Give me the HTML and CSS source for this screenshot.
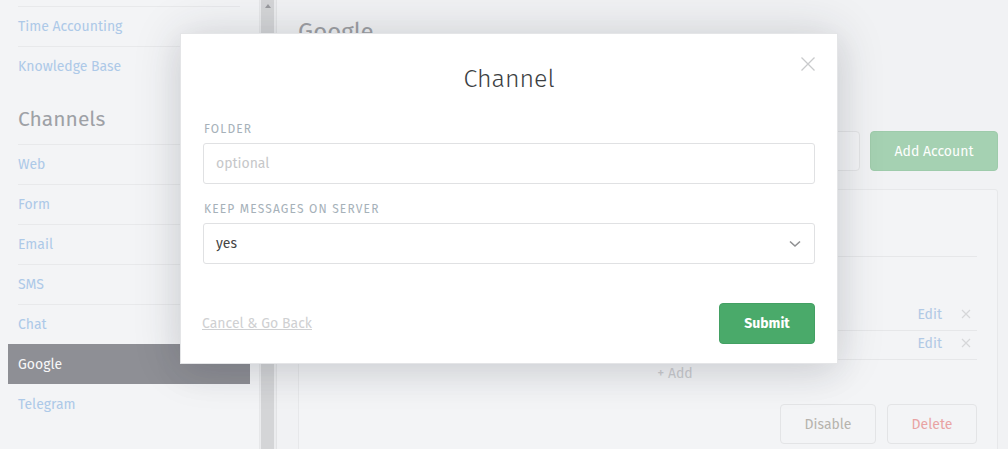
FILE: index.html
```html
<!DOCTYPE html>
<html lang="en">
<head>
<meta charset="utf-8">
<title>Channel</title>
<link rel="stylesheet" href="styles.css">
</head>
<body>
<div class="app">
  <aside class="sidebar">
    <ul class="nav">
      <li class="nav-item">Time Accounting</li>
      <li class="nav-item">Knowledge Base</li>
    </ul>
    <h2 class="nav-heading">Channels</h2>
    <ul class="nav">
      <li class="nav-item">Web</li>
      <li class="nav-item">Form</li>
      <li class="nav-item">Email</li>
      <li class="nav-item">SMS</li>
      <li class="nav-item">Chat</li>
      <li class="nav-item active">Google</li>
      <li class="nav-item">Telegram</li>
    </ul>
    <h2 class="nav-heading">System</h2>
  </aside>
  <div class="scrollbar">
    <div class="scroll-thumb"><span class="scroll-arrow"></span></div>
  </div>
  <main class="main">
    <div class="page-header">
      <h1 class="page-title">Google</h1>
    </div>
    <div class="page-actions">
      <button class="btn btn-plain btn-config">Settings</button>
      <button class="btn btn-green">Add Account</button>
    </div>
    <section class="panel">
      <div class="panel-head">
        <h3 class="panel-title">user@example.com</h3>
      </div>
      <div class="panel-sub">Inbound</div>
      <div class="row">
        <span class="row-name">INBOX</span>
        <span class="row-edit">Edit</span>
        <svg class="row-x" width="10" height="10" viewBox="0 0 10 10"><path d="M1 1L9 9M9 1L1 9" stroke="currentColor" stroke-width="1.2" fill="none"/></svg>
      </div>
      <div class="row">
        <span class="row-name">Archive</span>
        <span class="row-edit">Edit</span>
        <svg class="row-x" width="10" height="10" viewBox="0 0 10 10"><path d="M1 1L9 9M9 1L1 9" stroke="currentColor" stroke-width="1.2" fill="none"/></svg>
      </div>
      <div class="add-row">+ Add</div>
      <div class="panel-actions">
        <button class="btn btn-plain btn-disable">Disable</button>
        <button class="btn btn-plain btn-delete">Delete</button>
      </div>
    </section>
  </main>
</div>

<div class="modal">
  <svg class="modal-close" width="14" height="14" viewBox="0 0 14 14"><path d="M0.5 0.5L13.5 13.5M13.5 0.5L0.5 13.5" stroke="currentColor" stroke-width="1.3" fill="none"/></svg>
  <h2 class="modal-title">Channel</h2>
  <label class="field-label">Folder</label>
  <div class="field-input placeholder">optional</div>
  <label class="field-label">Keep Messages on Server</label>
  <div class="field-input field-select">
    <span>yes</span>
    <svg class="chevron" width="12" height="8" viewBox="0 0 12 8"><path d="M1 1.5L6 6L11 1.5" stroke="currentColor" stroke-width="1.6" fill="none"/></svg>
  </div>
  <div class="modal-footer">
    <a class="cancel-link">Cancel &amp; Go Back</a>
    <button class="btn btn-submit">Submit</button>
  </div>
</div>
</body>
</html>
```

FILE: styles.css
```css
* { box-sizing: border-box; }

html, body {
  margin: 0;
  padding: 0;
  height: 100%;
  overflow: hidden;
}

body {
  font-family: "Fira Sans", Lato, "Open Sans", sans-serif;
  font-size: 14px;
  background: #f1f2f4;
  color: #555;
}

.app {
  display: flex;
  height: 449px;
}

/* Sidebar */
.sidebar {
  width: 260px;
  flex: none;
  background: #f3f4f6;
  padding-top: 6px;
  border-right: 1px solid #e6e7e9;
}

.nav {
  list-style: none;
  margin: 0;
  padding: 0 9px 0 8px;
}

.nav-item {
  margin: 0 10px;
  height: 40px;
  line-height: 39px;
  border-top: 1px solid #e8e9eb;
  color: #adc9e8;
}

.nav-item.active {
  margin: 0;
  padding-left: 10px;
  background: #8e8f95;
  color: #f7f7f8;
  border-top-color: transparent;
}

.active + .nav-item {
  border-top-color: transparent;
}

.nav-heading {
  margin: 0;
  padding: 20px 18px 12px;
  font-size: 21px;
  line-height: 26px;
  font-weight: 400;
  color: #9ea1a6;
}

/* Scrollbar */
.scrollbar {
  width: 17px;
  flex: none;
  background: #ebecee;
  padding: 0 2px 0 1px;
  border-right: 1px solid #e2e3e5;
}

.scroll-thumb {
  height: 100%;
  background: #d4d5d7;
  display: flex;
  justify-content: center;
  padding-top: 4px;
}

.scroll-arrow {
  width: 0;
  height: 0;
  border-left: 3.5px solid transparent;
  border-right: 3.5px solid transparent;
  border-bottom: 4px solid #9a9b9e;
}

/* Main */
.main {
  flex: 1;
  padding: 14px 10px 0 21px;
  background: #f1f2f4;
}

.page-header {
  height: 117px;
}

.page-title {
  margin: 0;
  font-size: 24px;
  line-height: 36px;
  font-weight: 400;
  color: #9ea0a4;
}

.page-actions {
  display: flex;
  justify-content: flex-end;
  gap: 10px;
  height: 40px;
}

.btn {
  font-family: inherit;
  font-size: 14px;
  border-radius: 4px;
  border: 1px solid transparent;
  height: 40px;
  padding: 0 18px;
  cursor: pointer;
}

.btn-plain {
  background: #f3f4f6;
  border-color: #e3e4e6;
  color: #b6b3ad;
}

.btn-config {
  width: 130px;
  padding: 0;
}

.btn-green {
  width: 128px;
  background: #a5d1b2;
  border-color: #9ecbab;
  color: #fdfefd;
}

.panel {
  margin-top: 18px;
  background: #f3f4f6;
  border: 1px solid #e7e8ea;
  border-radius: 3px;
  padding: 0 20px;
  height: 300px;
}

.panel-head {
  height: 67px;
  border-bottom: 1px solid #e6e7e9;
  display: flex;
  align-items: center;
}

.panel-title {
  margin: 0;
  font-size: 18px;
  font-weight: 400;
  color: #a0a2a6;
}

.panel-sub {
  height: 45px;
  line-height: 45px;
  color: #b0b2b6;
  font-size: 12px;
  text-transform: uppercase;
}

.row {
  display: flex;
  align-items: center;
  height: 29px;
  border-bottom: 1px solid #e6e7e9;
  padding-bottom: 4px;
}

.row-name {
  flex: 1;
  color: #a5a7ab;
}

.row-edit {
  color: #b1c9e5;
}

.row-x {
  color: #d6d7d9;
  margin-left: 19px;
  margin-right: 6px;
}

.add-row {
  text-align: center;
  line-height: 28px;
  color: #cbcccf;
  padding-left: 54px;
}

.panel-actions {
  display: flex;
  justify-content: flex-end;
  gap: 11px;
  margin-top: 16px;
}

.btn-disable {
  width: 96px;
  padding: 0;
}

.btn-delete {
  width: 90px;
  padding: 0;
  color: #e9a3a3;
}

/* Modal */
.modal {
  position: absolute;
  left: 180px;
  top: 33px;
  width: 658px;
  background: #fff;
  padding: 25px 22px 19px;
  border: 1px solid #e4e5e7;
  box-shadow: 0 0 45px rgba(40, 45, 55, 0.16), 0 12px 30px rgba(40, 45, 55, 0.07);
}

.modal-close {
  position: absolute;
  top: 23px;
  right: 22px;
  color: #c9cacc;
}

.modal-title {
  margin: 0 0 22px;
  text-align: center;
  font-size: 25px;
  line-height: 40px;
  font-weight: 300;
  color: #3b3e42;
}

.field-label {
  display: block;
  font-size: 12px;
  line-height: 16px;
  text-transform: uppercase;
  letter-spacing: 1.15px;
  color: #a6b1b9;
  padding-left: 1px;
  margin-bottom: 6px;
}

.field-input {
  height: 41px;
  border: 1px solid #e0e1e3;
  border-radius: 3px;
  padding: 0 12px;
  display: flex;
  align-items: center;
  color: #454545;
  margin-bottom: 17px;
}

.field-input.placeholder {
  color: #c6c7c9;
}

.field-select {
  justify-content: space-between;
}

.chevron {
  color: #8f9092;
  margin-right: 1px;
}

.modal-footer {
  display: flex;
  justify-content: space-between;
  align-items: center;
  margin-top: 39px;
}

.cancel-link {
  color: #cfd0d2;
  text-decoration: underline;
  margin-left: -1px;
}

.btn-submit {
  width: 96px;
  height: 41px;
  padding: 0;
  background: #4aaa6a;
  border-color: #43a063;
  color: #fff;
  font-weight: 700;
}
```
